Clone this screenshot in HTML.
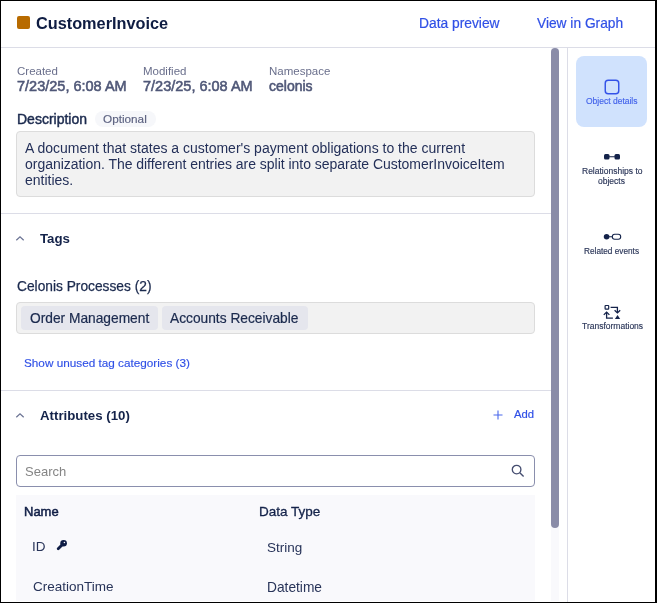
<!DOCTYPE html>
<html><head><meta charset="utf-8"><style>
html,body{margin:0;padding:0;}
body{width:657px;height:603px;position:relative;overflow:hidden;background:#fff;font-family:"Liberation Sans",sans-serif;}
.frame{position:absolute;left:0;top:0;width:657px;height:603px;box-sizing:border-box;border-left:1px solid #000;border-top:1px solid #000;border-right:2px solid #000;border-bottom:1px solid #000;pointer-events:none;z-index:10}
.t{position:absolute;white-space:nowrap;will-change:transform;}
.r{position:absolute;}
</style></head><body>
<div class="r" style="left:17px;top:16px;width:13px;height:13px;background:#b86b00;border-radius:2px"></div>
<div class="t" style="left:36px;top:13px;font-size:16.3px;line-height:20px;color:#0e1c42;font-weight:700;letter-spacing:0px;">CustomerInvoice</div>
<div class="t" style="left:419px;top:15px;font-size:13.8px;line-height:17px;color:#3050e6;font-weight:400;letter-spacing:0px;-webkit-text-stroke:0.2px #3050e6">Data preview</div>
<div class="t" style="left:536.5px;top:16px;font-size:13.75px;line-height:16px;color:#3050e6;font-weight:400;letter-spacing:0px;-webkit-text-stroke:0.2px #3050e6">View in Graph</div>
<div class="r" style="left:1px;top:47px;width:654px;height:1px;background:#dcdde7"></div>
<div class="r" style="left:567px;top:48px;width:1px;height:554px;background:#dcdde7"></div>
<div class="r" style="left:551px;top:48px;width:8px;height:553px;background:#f9f9fc"></div>
<div class="r" style="left:551px;top:48px;width:8px;height:480px;background:#8a8ca8;border-radius:4px"></div>
<div class="t" style="left:17px;top:64px;font-size:11.5px;line-height:14px;color:#6a6f8c;font-weight:400;letter-spacing:0px;">Created</div>
<div class="t" style="left:17px;top:78px;font-size:14.5px;line-height:17px;color:#4f5777;font-weight:400;letter-spacing:0px;-webkit-text-stroke:0.55px #4f5777">7/23/25, 6:08 AM</div>
<div class="t" style="left:143px;top:64px;font-size:11.5px;line-height:14px;color:#6a6f8c;font-weight:400;letter-spacing:0px;">Modified</div>
<div class="t" style="left:143px;top:78px;font-size:14.5px;line-height:17px;color:#4f5777;font-weight:400;letter-spacing:0px;-webkit-text-stroke:0.55px #4f5777">7/23/25, 6:08 AM</div>
<div class="t" style="left:269px;top:64px;font-size:11.5px;line-height:14px;color:#6a6f8c;font-weight:400;letter-spacing:0px;">Namespace</div>
<div class="t" style="left:269px;top:78px;font-size:14px;line-height:17px;color:#4f5777;font-weight:400;letter-spacing:0px;-webkit-text-stroke:0.55px #4f5777">celonis</div>
<div class="t" style="left:17px;top:111px;font-size:14px;line-height:17px;color:#1b2a4e;font-weight:400;letter-spacing:0px;-webkit-text-stroke:0.45px #1b2a4e">Description</div>
<div class="r" style="left:95px;top:111px;width:61px;height:16px;background:#f6f7fa;border-radius:8px"></div>
<div class="t" style="left:102.5px;top:112px;font-size:11.75px;line-height:14px;color:#5c6280;font-weight:400;letter-spacing:0px;-webkit-text-stroke:0.15px #5c6280">Optional</div>
<div class="r" style="left:16px;top:131px;width:519px;height:66px;background:#f2f2f2;border:1px solid #dcdcdc;border-radius:4px;box-sizing:border-box"></div>
<div class="t" style="left:25px;top:140px;font-size:14px;line-height:17px;color:#243059;font-weight:400;letter-spacing:0px;">A document that states a customer's payment obligations to the current</div>
<div class="t" style="left:25px;top:156px;font-size:14px;line-height:17px;color:#243059;font-weight:400;letter-spacing:-0.03px;">organization. The different entries are split into separate CustomerInvoiceItem</div>
<div class="t" style="left:25px;top:172px;font-size:14px;line-height:17px;color:#243059;font-weight:400;letter-spacing:0px;">entities.</div>
<div class="r" style="left:1px;top:213px;width:550px;height:1px;background:#dcdde7"></div>
<svg class="r" style="left:15px;top:235px" width="10" height="7" viewBox="0 0 10 7"><path d="M1.3 5.3 L5 1.8 L8.7 5.3" fill="none" stroke="#6b7394" stroke-width="1.2"/></svg>
<div class="t" style="left:40px;top:231px;font-size:13.25px;line-height:16px;color:#14234a;font-weight:700;letter-spacing:0px;">Tags</div>
<div class="t" style="left:17px;top:279px;font-size:13.75px;line-height:16px;color:#1b2a4e;font-weight:400;letter-spacing:0px;-webkit-text-stroke:0.25px #1b2a4e">Celonis Processes (2)</div>
<div class="r" style="left:16px;top:302px;width:519px;height:32px;background:#f2f2f2;border:1px solid #dcdcdc;border-radius:4px;box-sizing:border-box"></div>
<div class="r" style="left:21px;top:306px;width:137px;height:24px;background:#e5e6ed;border-radius:4px"></div>
<div class="r" style="left:162px;top:306px;width:146px;height:24px;background:#e5e6ed;border-radius:4px"></div>
<div class="t" style="left:29.5px;top:311px;font-size:13.75px;line-height:16px;color:#1b2a4e;font-weight:400;letter-spacing:0px;-webkit-text-stroke:0.2px #1b2a4e">Order Management</div>
<div class="t" style="left:169.5px;top:311px;font-size:13.75px;line-height:16px;color:#1b2a4e;font-weight:400;letter-spacing:0px;-webkit-text-stroke:0.2px #1b2a4e">Accounts Receivable</div>
<div class="t" style="left:24.3px;top:356px;font-size:11.75px;line-height:14px;color:#3050e6;font-weight:400;letter-spacing:0px;-webkit-text-stroke:0.15px #3050e6">Show unused tag categories (3)</div>
<div class="r" style="left:1px;top:390px;width:550px;height:1px;background:#dcdde7"></div>
<svg class="r" style="left:15px;top:412px" width="10" height="7" viewBox="0 0 10 7"><path d="M1.3 5.3 L5 1.8 L8.7 5.3" fill="none" stroke="#6b7394" stroke-width="1.2"/></svg>
<div class="t" style="left:40px;top:408px;font-size:13.25px;line-height:16px;color:#14234a;font-weight:700;letter-spacing:0px;">Attributes (10)</div>
<svg class="r" style="left:492px;top:409px" width="12" height="12" viewBox="0 0 12 12"><path d="M6 1.5V10.5M1.5 6H10.5" stroke="#4a68ec" stroke-width="1.1" fill="none"/></svg>
<div class="t" style="left:514px;top:407px;font-size:11.25px;line-height:14px;color:#3050e6;font-weight:400;letter-spacing:0px;-webkit-text-stroke:0.2px #3050e6">Add</div>
<div class="r" style="left:16px;top:455px;width:519px;height:32px;background:#fff;border:1px solid #8a8fad;border-radius:4px;box-sizing:border-box"></div>
<div class="t" style="left:25px;top:464px;font-size:13px;line-height:16px;color:#858585;font-weight:400;letter-spacing:0px;">Search</div>
<svg class="r" style="left:510px;top:463px" width="16" height="16" viewBox="0 0 16 16"><circle cx="6.6" cy="6.6" r="4.3" fill="none" stroke="#454d70" stroke-width="1.35"/><path d="M9.8 9.8L13.6 13.6" stroke="#454d70" stroke-width="1.35"/></svg>
<div class="r" style="left:16px;top:495px;width:519px;height:106px;background:#f9f9fc"></div>
<div class="t" style="left:23.5px;top:504px;font-size:13px;line-height:16px;color:#0f1d45;font-weight:400;letter-spacing:0px;-webkit-text-stroke:0.5px #0f1d45">Name</div>
<div class="t" style="left:259px;top:504px;font-size:13.5px;line-height:16px;color:#14234a;font-weight:400;letter-spacing:0px;-webkit-text-stroke:0.3px #14234a">Data Type</div>
<div class="t" style="left:32px;top:539px;font-size:13.5px;line-height:16px;color:#283459;font-weight:400;letter-spacing:0px;">ID</div>
<div class="t" style="left:267px;top:540px;font-size:13.5px;line-height:16px;color:#283459;font-weight:400;letter-spacing:0px;">String</div>
<div class="t" style="left:32.5px;top:579px;font-size:13.5px;line-height:16px;color:#283459;font-weight:400;letter-spacing:0px;">CreationTime</div>
<div class="t" style="left:267px;top:580px;font-size:13.75px;line-height:16px;color:#283459;font-weight:400;letter-spacing:0px;">Datetime</div>
<svg class="r" style="left:52px;top:535px" width="20" height="20" viewBox="0 0 20 20"><circle cx="11.6" cy="8.2" r="3.3" fill="#0f1d45"/><path d="M10 10L6.2 13.8" stroke="#0f1d45" stroke-width="2.8" stroke-linecap="round"/><circle cx="12.4" cy="7.5" r="0.8" fill="#f9f9fc"/></svg>
<div class="r" style="left:576px;top:56px;width:71px;height:71px;background:#d0e2fd;border-radius:8px"></div>
<svg class="r" style="left:604px;top:79px" width="16" height="16" viewBox="0 0 16 16"><rect x="1.25" y="1.25" width="13.5" height="13.5" rx="3" fill="none" stroke="#3352e8" stroke-width="1.45"/></svg>
<div class="t" style="left:585.5px;top:96px;font-size:8.5px;line-height:10px;color:#4262ea;font-weight:400;letter-spacing:0px;-webkit-text-stroke:0.15px #4262ea">Object details</div>
<svg class="r" style="left:603px;top:153px" width="18" height="8" viewBox="0 0 18 8"><rect x="1" y="1" width="5.5" height="5.5" rx="1.5" fill="#14234a"/><rect x="11.5" y="1" width="5.5" height="5.5" rx="1.5" fill="#14234a"/><path d="M6 3.75H12" stroke="#14234a" stroke-width="1"/></svg>
<div class="t" style="left:582px;top:166px;font-size:8.5px;line-height:10px;color:#2a3558;font-weight:400;letter-spacing:0px;-webkit-text-stroke:0.15px #2a3558">Relationships to</div>
<div class="t" style="left:598px;top:176px;font-size:8.5px;line-height:10px;color:#2a3558;font-weight:400;letter-spacing:0px;-webkit-text-stroke:0.15px #2a3558">objects</div>
<svg class="r" style="left:603px;top:233px" width="19" height="8" viewBox="0 0 19 8"><circle cx="3.6" cy="3.75" r="2.8" fill="#14234a"/><rect x="9.3" y="1.3" width="8.4" height="4.9" rx="2.4" fill="none" stroke="#14234a" stroke-width="1.1"/><path d="M6 3.75H9.5" stroke="#14234a" stroke-width="1"/></svg>
<div class="t" style="left:584px;top:247px;font-size:8.25px;line-height:10px;color:#2a3558;font-weight:400;letter-spacing:0px;-webkit-text-stroke:0.15px #2a3558">Related events</div>
<svg class="r" style="left:603px;top:304px" width="19" height="17" viewBox="603 304 19 17"><rect x="605.1" y="305.5" width="3.6" height="3.6" rx="0.6" fill="none" stroke="#14234a" stroke-width="1.2"/><path d="M610.6 307.4H617.4V312.6" fill="none" stroke="#14234a" stroke-width="1.3"/><path d="M614.6 310.2L617.4 312.9L620.2 310.2" fill="none" stroke="#14234a" stroke-width="1.3"/><path d="M612.9 318.2H606.6V312.4" fill="none" stroke="#14234a" stroke-width="1.3"/><path d="M603.8 314.9L606.6 312.1L609.4 314.9" fill="none" stroke="#14234a" stroke-width="1.3"/><path d="M614.9 319.1L617.55 315.1L620.2 319.1Z" fill="#14234a"/></svg>
<div class="t" style="left:581.5px;top:321px;font-size:8.5px;line-height:10px;color:#2a3558;font-weight:400;letter-spacing:0px;-webkit-text-stroke:0.15px #2a3558">Transformations</div>
<div class="frame"></div>
</body></html>
